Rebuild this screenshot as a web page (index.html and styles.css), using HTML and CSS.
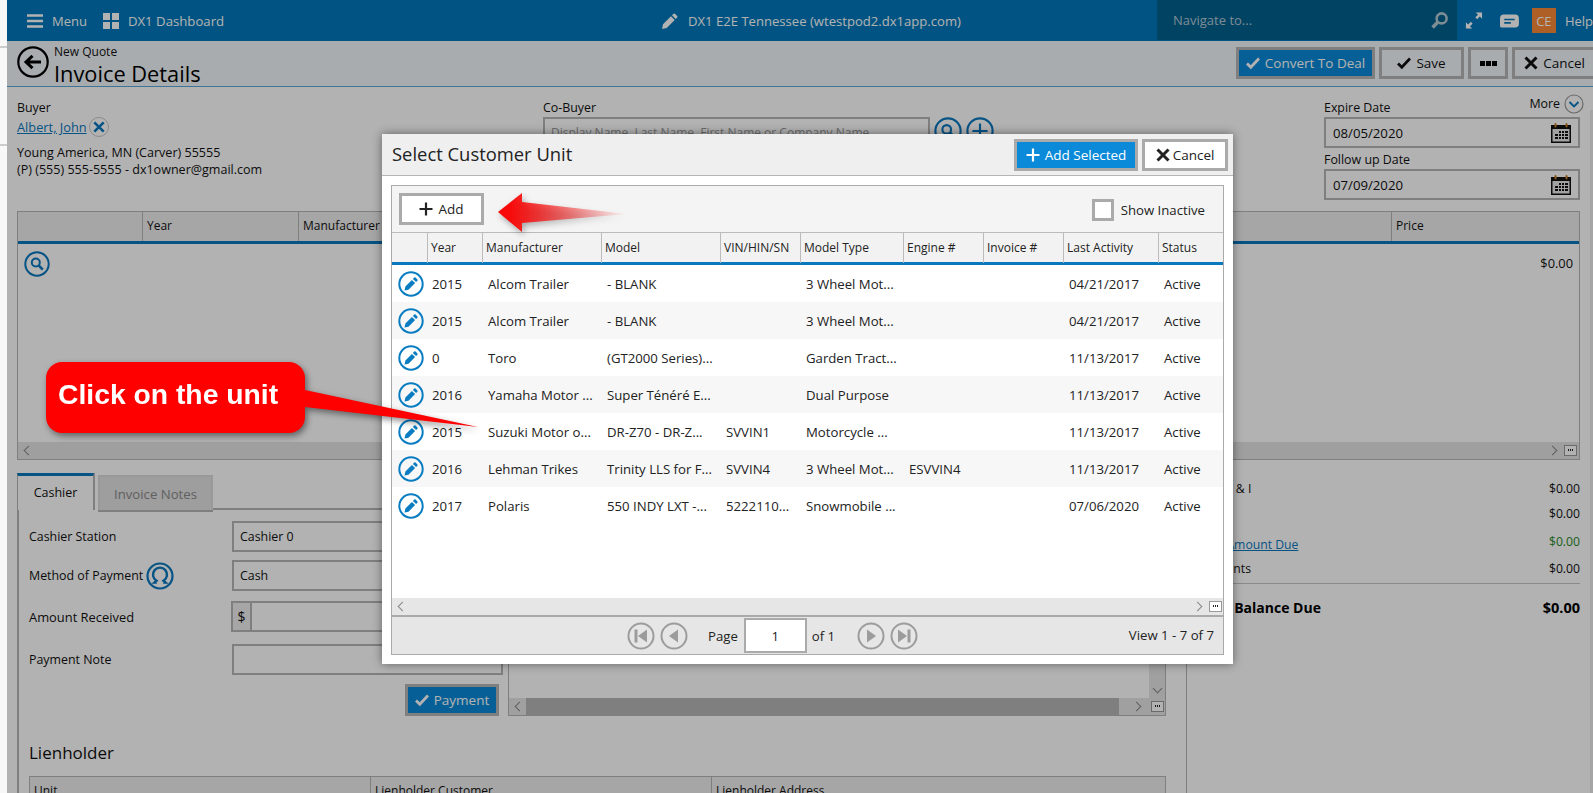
FILE: index.html
```html
<!DOCTYPE html>
<html lang="en">
<head>
<meta charset="utf-8">
<title>Invoice Details</title>
<link rel="stylesheet" href="styles.css">
</head>
<body>
<svg class="sprite" aria-hidden="true">
  <symbol id="i-edit" viewBox="0 0 26 26">
    <circle cx="13" cy="13" r="11.7" fill="none" stroke="currentColor" stroke-width="2"/>
    <path fill="currentColor" d="M16.2 6.6a1 1 0 0 1 1.4 0l1.8 1.8a1 1 0 0 1 0 1.4l-1.3 1.3-3.2-3.2zM13.9 8.9l3.2 3.2-6.6 6.6-4 .9.9-4z"/>
  </symbol>
  <symbol id="i-search" viewBox="0 0 26 26">
    <circle cx="13" cy="13" r="11.7" fill="none" stroke="currentColor" stroke-width="2"/>
    <circle cx="11.8" cy="11.5" r="4" fill="none" stroke="currentColor" stroke-width="2"/>
    <path d="M14.8 14.6l4 4" stroke="currentColor" stroke-width="2.6"/>
  </symbol>
  <symbol id="i-plus-c" viewBox="0 0 26 26">
    <circle cx="13" cy="13" r="11.7" fill="none" stroke="currentColor" stroke-width="2"/>
    <path d="M13 6v14M6 13h14" stroke="currentColor" stroke-width="2"/>
  </symbol>
  <symbol id="i-plus" viewBox="0 0 14 14"><path d="M7 .5v13M.5 7h13" stroke="currentColor" stroke-width="2.2"/></symbol>
  <symbol id="i-x" viewBox="0 0 14 14"><path d="M1.500 1.500l11 11M12.500 1.500l-11 11" stroke="currentColor" stroke-width="3"/></symbol>
  <symbol id="i-check" viewBox="0 0 14 14"><path d="M1 7.500l3.800 3.800L13 2.500" fill="none" stroke="currentColor" stroke-width="2.800"/></symbol>
  <symbol id="i-cal" viewBox="0 0 22 22">
    <rect x="1" y="3" width="20" height="18" fill="#111"/>
    <rect x="2.500" y="7" width="17" height="12.500" fill="#e8e8e8"/>
    <path d="M9 9h2v2H9zM12 9h2v2h-2zM15 9h3v2h-3zM5 12h3v2H5zM9 12h2v2H9zM12 12h2v2h-2zM15 12h3v2h-3zM5 15h3v2H5zM9 15h2v2H9zM12 15h2v2h-2zM15 15h3v2h-3z" fill="#111"/>
    <rect x="4.500" y="1" width="2" height="4.500" rx="1" fill="#c87a20"/>
    <rect x="15.500" y="1" width="2" height="4.500" rx="1" fill="#c87a20"/>
  </symbol>
  <symbol id="i-first" viewBox="0 0 28 28">
    <circle cx="14" cy="14" r="12.500" fill="none" stroke="currentColor" stroke-width="2"/>
    <path fill="currentColor" d="M7.500 7.500h3v13h-3zM20 7.500v13l-9-6.500z"/>
  </symbol>
  <symbol id="i-prev" viewBox="0 0 28 28">
    <circle cx="14" cy="14" r="12.500" fill="none" stroke="currentColor" stroke-width="2"/>
    <path fill="currentColor" d="M18 7.500v13l-9-6.500z"/>
  </symbol>
  <symbol id="i-next" viewBox="0 0 28 28">
    <circle cx="14" cy="14" r="12.500" fill="none" stroke="currentColor" stroke-width="2"/>
    <path fill="currentColor" d="M10 7.500v13l9-6.500z"/>
  </symbol>
  <symbol id="i-last" viewBox="0 0 28 28">
    <circle cx="14" cy="14" r="12.500" fill="none" stroke="currentColor" stroke-width="2"/>
    <path fill="currentColor" d="M20.500 7.500h-3v13h3zM8 7.500v13l9-6.500z"/>
  </symbol>
</svg>

<div class="gutter"></div>

<div class="app">
  <header class="topbar">
    <div class="topbar-left">
      <svg class="tb-icon" viewBox="0 0 16 14"><path d="M0 1.500h16M0 7h16M0 12.500h16" stroke="currentColor" stroke-width="2.400"/></svg>
      <span class="tb-text">Menu</span>
      <svg class="tb-icon tb-grid" viewBox="0 0 16 16"><path fill="currentColor" d="M0 0h7v7H0zM9 0h7v7H9zM0 9h7v7H0zM9 9h7v7H9z"/></svg>
      <span class="tb-text">DX1 Dashboard</span>
    </div>
    <div class="topbar-mid">
      <svg class="tb-pencil" viewBox="0 0 16 16"><path fill="currentColor" d="M11.500.800a1 1 0 0 1 1.400 0l2.300 2.300a1 1 0 0 1 0 1.400l-1.500 1.500L10 2.300zM9 3.300L12.700 7l-8 8L0 16l1-4.700z"/></svg>
      <span>DX1 E2E Tennessee (wtestpod2.dx1app.com)</span>
    </div>
    <div class="navsearch">
      <span>Navigate to...</span>
      <svg class="tb-mag" viewBox="0 0 16 16"><circle cx="10" cy="6" r="4.700" fill="none" stroke="currentColor" stroke-width="2.400"/><path d="M6.500 9.500L1.500 14.500" stroke="currentColor" stroke-width="3.400"/></svg>
    </div>
    <div class="topbar-right">
      <svg class="tb-expand" viewBox="0 0 20 20"><path fill="currentColor" d="M12 1h7v7l-2.500-2.500-3 3-2-2 3-3zM8 19H1v-7l2.500 2.500 3-3 2 2-3 3z"/></svg>
      <svg class="tb-chat" viewBox="0 0 20 16"><path fill="currentColor" fill-rule="evenodd" d="M4 1h12a4 4 0 0 1 4 4v6a4 4 0 0 1-4 4H2a2 2 0 0 1-2-2V5a4 4 0 0 1 4-4zM4.500 5.500v1.800h11V5.500zm0 3.500v1.800h7V9z"/></svg>
      <span class="avatar">CE</span>
      <span class="tb-text">Help</span>
    </div>
  </header>

  <div class="pagehead">
    <svg class="back" viewBox="0 0 32 32"><circle cx="16" cy="16" r="14.700" fill="none" stroke="currentColor" stroke-width="2.200"/><path d="M24 16H10M15.500 9.800L9 16l6.500 6.200" fill="none" stroke="currentColor" stroke-width="3"/></svg>
    <div class="titles">
      <div class="crumb">New Quote</div>
      <h1 class="title">Invoice Details</h1>
    </div>
    <div class="actions">
      <button class="btn btn-primary btn-convert"><svg class="ico"><use href="#i-check"/></svg>Convert To Deal</button>
      <button class="btn btn-save"><svg class="ico"><use href="#i-check"/></svg>Save</button>
      <button class="btn btn-more"><span class="dots"></span></button>
      <button class="btn btn-cancel"><svg class="ico"><use href="#i-x"/></svg>Cancel</button>
    </div>
  </div>

  <main class="content">
    <section class="cust">
      <div class="buyer">
        <div class="lbl">Buyer</div>
        <div class="buyer-name"><a class="link" href="#">Albert, John</a>
          <span class="xbadge"><svg viewBox="0 0 14 14"><use href="#i-x"/></svg></span>
        </div>
        <div class="addr">Young America, MN (Carver) 55555<br>(P) (555) 555-5555 - dx1owner@gmail.com</div>
      </div>
      <div class="cobuyer">
        <div class="lbl">Co-Buyer</div>
        <div class="cobuyer-row">
          <div class="field field-co">Display Name, Last Name, First Name or Company Name</div>
          <svg class="round round-first"><use href="#i-search"/></svg>
          <svg class="round"><use href="#i-plus-c"/></svg>
        </div>
      </div>
      <div class="dates">
        <div class="dates-head"><span class="lbl">Expire Date</span>
          <span class="more">More <svg class="more-ico" viewBox="0 0 20 20"><circle cx="10" cy="10" r="9" fill="none" stroke="#9a9a9a" stroke-width="1.200"/><path d="M5.500 8l4.500 4.500L14.500 8" fill="none" stroke="#0a78c0" stroke-width="1.800"/></svg></span>
        </div>
        <div class="field field-date"><span>08/05/2020</span><svg class="cal"><use href="#i-cal"/></svg></div>
        <div class="lbl lbl-gap">Follow up Date</div>
        <div class="field field-date"><span>07/09/2020</span><svg class="cal"><use href="#i-cal"/></svg></div>
      </div>
    </section>

    <section class="bgtable">
      <div class="bgtable-head">
        <div class="th"></div><div class="th">Year</div><div class="th">Manufacturer</div><div class="th">Price</div>
      </div>
      <div class="bgtable-body">
        <svg class="round round-sm"><use href="#i-search"/></svg>
        <span class="bg-price">$0.00</span>
      </div>
      <div class="hbar"><span class="chev chev-l"></span><span class="chev chev-r"></span><span class="grip"></span></div>
    </section>

    <section class="lower">
      <div class="left">
        <div class="tabs">
          <div class="tab tab-on">Cashier</div>
          <div class="tab tab-off">Invoice Notes</div>
          <div class="tab-fill"></div>
        </div>
        <div class="panel">
          <div class="cashier">
            <div class="form">
              <div class="frow frow-1"><label>Cashier Station</label><div class="field">Cashier 0</div></div>
              <div class="frow frow-2"><label class="lbl-ico">Method of Payment
                <svg class="round round-pay" viewBox="0 0 28 28"><circle cx="14" cy="14" r="12.500" fill="none" stroke="currentColor" stroke-width="2.200"/><path d="M10.800 20.500H8.500l2-1.800a7 7 0 1 1 7 0l2 1.800h-2.300" fill="none" stroke="currentColor" stroke-width="2.400"/></svg></label><div class="field">Cash</div></div>
              <div class="frow frow-3"><label class="lbl-wide">Amount Received</label><div class="field field-money"><span class="dollar">$</span></div></div>
              <div class="frow frow-4"><label>Payment Note</label><div class="field"></div></div>
              <div class="pay-row"><button class="btn btn-primary btn-pay"><svg class="ico"><use href="#i-check"/></svg>Payment</button></div>
            </div>
            <div class="paybox">
              <div class="paybox-main"><div class="vbar"><span class="chev chev-d"></span></div></div>
              <div class="paybar">
                <span class="paybar-end"><span class="chev chev-l"></span></span>
                <span class="paybar-thumb"></span>
                <span class="paybar-end paybar-end-r"><span class="chev chev-r"></span></span>
                <span class="grip"></span>
              </div>
            </div>
          </div>
          <h2 class="lien-title">Lienholder</h2>
          <div class="lien-head"><div class="th">Unit</div><div class="th">Lienholder Customer</div><div class="th">Lienholder Address</div></div>
        </div>
      </div>
      <aside class="summary">
        <div class="srow srow-1"><span>Total F &amp; I</span><span>$0.00</span></div>
        <div class="srow srow-2"><span>Tax</span><span>$0.00</span></div>
        <div class="srow srow-3"><a class="link" href="#">Total Amount Due</a><span class="green">$0.00</span></div>
        <div class="srow srow-4"><span>Payments</span><span>$0.00</span></div>
        <div class="srow srow-total"><span class="total-label">Total Balance Due</span><span>$0.00</span></div>
      </aside>
    </section>
  </main>
</div>

<div class="pagebar"></div>
<div class="scrim"></div>

<div class="modal">
  <div class="modal-head">
    <h2 class="modal-title">Select Customer Unit</h2>
    <button class="mbtn mbtn-primary mbtn-sel"><svg class="ico ico-plus"><use href="#i-plus"/></svg>Add Selected</button>
    <button class="mbtn mbtn-cancel"><svg class="ico"><use href="#i-x"/></svg>Cancel</button>
  </div>
  <div class="grid">
    <div class="toolbar">
      <button class="mbtn mbtn-add"><svg class="ico ico-plus"><use href="#i-plus"/></svg>Add</button>
      <label class="inactive"><span class="check"></span>Show Inactive</label>
    </div>
    <div class="row row-head">
      <div></div><div>Year</div><div>Manufacturer</div><div>Model</div><div>VIN/HIN/SN</div><div>Model Type</div><div>Engine #</div><div>Invoice #</div><div>Last Activity</div><div>Status</div>
    </div>
    <div class="rows">
      <div class="row row-data"><svg class="edit"><use href="#i-edit"/></svg><div>2015</div><div>Alcom Trailer</div><div>- BLANK</div><div></div><div>3 Wheel Mot...</div><div></div><div></div><div>04/21/2017</div><div>Active</div></div>
      <div class="row row-data"><svg class="edit"><use href="#i-edit"/></svg><div>2015</div><div>Alcom Trailer</div><div>- BLANK</div><div></div><div>3 Wheel Mot...</div><div></div><div></div><div>04/21/2017</div><div>Active</div></div>
      <div class="row row-data"><svg class="edit"><use href="#i-edit"/></svg><div>0</div><div>Toro</div><div>(GT2000 Series)...</div><div></div><div>Garden Tract...</div><div></div><div></div><div>11/13/2017</div><div>Active</div></div>
      <div class="row row-data"><svg class="edit"><use href="#i-edit"/></svg><div>2016</div><div>Yamaha Motor ...</div><div>Super Ténéré E...</div><div></div><div>Dual Purpose</div><div></div><div></div><div>11/13/2017</div><div>Active</div></div>
      <div class="row row-data"><svg class="edit"><use href="#i-edit"/></svg><div>2015</div><div>Suzuki Motor o...</div><div>DR-Z70 - DR-Z...</div><div>SVVIN1</div><div>Motorcycle ...</div><div></div><div></div><div>11/13/2017</div><div>Active</div></div>
      <div class="row row-data"><svg class="edit"><use href="#i-edit"/></svg><div>2016</div><div>Lehman Trikes</div><div>Trinity LLS for F...</div><div>SVVIN4</div><div>3 Wheel Mot...</div><div>ESVVIN4</div><div></div><div>11/13/2017</div><div>Active</div></div>
      <div class="row row-data"><svg class="edit"><use href="#i-edit"/></svg><div>2017</div><div>Polaris</div><div>550 INDY LXT -...</div><div>5222110...</div><div>Snowmobile ...</div><div></div><div></div><div>07/06/2020</div><div>Active</div></div>
    </div>
    <div class="hbar hbar-light"><span class="chev chev-l"></span><span class="chev chev-r"></span><span class="grip"></span></div>
    <div class="pager">
      <div class="pager-center">
        <svg class="pg pg-first"><use href="#i-first"/></svg>
        <svg class="pg"><use href="#i-prev"/></svg>
        <span class="pg-page">Page</span>
        <span class="pg-input">1</span>
        <span class="pg-of">of 1</span>
        <svg class="pg pg-next"><use href="#i-next"/></svg>
        <svg class="pg"><use href="#i-last"/></svg>
      </div>
      <span class="pg-view">View 1 - 7 of 7</span>
    </div>
  </div>
</div>

<svg class="arrow" viewBox="495 186 140 52">
  <defs>
    <linearGradient id="fade" gradientUnits="userSpaceOnUse" x1="510" y1="0" x2="627" y2="0">
      <stop offset="0" stop-color="#f80a0a"/>
      <stop offset="1" stop-color="#f80a0a" stop-opacity="0"/>
    </linearGradient>
  </defs>
  <path fill="url(#fade)" d="M498 212L522 193V202L627 214L522 223V232Z"/>
</svg>

<svg class="callout" viewBox="40 355 445 90">
  <path fill="#f00" d="M62 362H289A16 16 0 0 1 305 378V390L478 427L305 407V417A16 16 0 0 1 289 433H62A16 16 0 0 1 46 417V378A16 16 0 0 1 62 362Z"/>
  <text class="callout-text" x="58" y="404">Click on the unit</text>
</svg>
</body>
</html>
```
FILE: styles.css
```css
* { box-sizing: border-box; }
html, body { margin: 0; height: 793px; overflow: hidden; }
body {
  display: flex;
  width: 1593px;
  position: relative;
  font: 12.4px/18px "Open Sans", "Noto Sans", sans-serif;
  color: #111;
  background: #fff;
}
.sprite { width: 0; height: 0; position: absolute; }
svg { display: block; }
h1, h2 { margin: 0; font-weight: 400; }
button { font: inherit; margin: 0; }
a.link { color: #0a78c0; text-decoration: underline; }

.gutter {
  flex: 0 0 7px;
  background: linear-gradient(#f8f8f8 46px, #ccc 46px, #ccc 48px, #f8f8f8 48px, #f8f8f8 144px, #ccc 144px, #ccc 146px, #f8f8f8 146px);
}
.app { flex: 0 0 1586px; width: 1586px; display: flex; flex-direction: column; }

/* top bar */
.topbar { height: 41px; flex: none; display: flex; align-items: center; background: #0078ba; color: #fff; font-size: 13px; }
.topbar-left { flex: 0 0 490px; display: flex; align-items: center; padding-left: 20px; }
.topbar-left .tb-text:last-child { font-size: 13.2px; }
.tb-icon { width: 16px; height: 14px; margin-right: 9px; }
.tb-grid { height: 16px; margin-left: 16px; }
.topbar-mid { flex: 0 0 660px; display: flex; align-items: center; padding-left: 165px; font-size: 13.1px; }
.tb-pencil { width: 16px; height: 16px; margin-right: 10px; }
.navsearch { flex: 0 0 300px; height: 40px; align-self: flex-start; background: #00608f; display: flex; align-items: center; justify-content: space-between; padding: 0 9px 0 16px; color: #b5c9d4; font-size: 13px; }
.tb-mag { width: 17px; height: 17px; }
.topbar-right { display: flex; align-items: center; flex: 1; white-space: nowrap; overflow: hidden; }
.tb-expand { width: 19px; height: 19px; margin-left: 8px; }
.tb-chat { width: 20px; height: 16px; margin-left: 17px; }
.avatar { width: 24px; height: 25px; margin: 0 9px 0 13px; background: #fa8835; display: flex; align-items: center; justify-content: center; font-size: 13px; flex: none; }

/* page header */
.pagehead { height: 46px; flex: none; display: flex; background: #f1f7fb; border-bottom: 1px solid #5ba6d6; padding-left: 10px; position: relative; }
.back { width: 32px; height: 32px; margin-top: 5px; color: #000; flex: none; }
.titles { margin-left: 5px; margin-top: 2px; }
.crumb { font-size: 12px; line-height: 17px; }
.title { font-size: 21.8px; line-height: 26px; margin-top: 1px; color: #000; }
.actions { margin-left: auto; display: flex; gap: 4px; padding-top: 6px; margin-right: -4px; height: 38px; }
.btn { height: 32px; border: 3px solid #b7b7b7; background: transparent; color: #111; display: flex; align-items: center; justify-content: center; font-size: 13.5px; padding: 0; white-space: nowrap; }
.btn .ico, .mbtn .ico { width: 14px; height: 14px; margin-right: 5px; flex: none; }
.btn-primary { background: #0a8ad8; color: #fff; }
.btn-convert { width: 139px; }
.btn-save { width: 85px; }
.btn-more { width: 40px; }
.btn-cancel { width: 85px; }
.dots { width: 17px; height: 5px; background: repeating-linear-gradient(90deg, #000 0 5px, transparent 5px 6px); }

/* customer block */
.content { padding: 0 0 0 10px; flex: 1; min-height: 0; }
.cust { height: 124px; display: grid; grid-template-columns: 526px 781px 256px; padding-top: 12px; }
.lbl { line-height: 18px; font-size: 12.4px; display: block; }
.buyer-name { display: flex; align-items: center; height: 20px; gap: 2px; }
.buyer-name .link { font-size: 12.8px; }
.xbadge { width: 20px; height: 20px; border: 1px solid #c8c8c8; border-radius: 50%; display: flex; align-items: center; justify-content: center; color: #0a78c0; }
.xbadge svg { width: 12px; height: 12px; }
.addr { margin-top: 7px; line-height: 17px; font-size: 12.55px; }
.cobuyer-row { display: flex; align-items: flex-start; }
.field { height: 31px; border: 2px solid #b7b7b7; background: transparent; display: flex; align-items: center; padding: 0 6px; }
.field-co { width: 387px; color: #999; font-size: 12px; }
.round { width: 28px; height: 28px; color: #0a78c0; margin-left: 4px; flex: none; }
.dates-head { display: flex; justify-content: space-between; align-items: flex-start; height: 18px; }
.more { display: flex; align-items: center; gap: 4px; margin-right: -4px; margin-top: -5px; }
.more-ico { width: 20px; height: 20px; }
.field-date { justify-content: space-between; padding: 0 6px 0 7px; font-size: 13.2px; }
.cal { width: 22px; height: 22px; }
.lbl-gap { margin-top: 3px; }

/* background table */
.bgtable { width: 1563px; height: 249px; border: 1px solid #b7b7b7; display: flex; flex-direction: column; }
.bgtable-head { display: grid; grid-template-columns: 124px 156px 1fr 188px; height: 32px; flex: none; background: #eee; border-bottom: 3px solid #0a78bd; font-size: 12px; }
.th { padding: 5px 4px; border-left: 1px solid #b7b7b7; }
.th:first-child { border-left: 0; }
.bgtable-body { flex: 1; display: flex; justify-content: space-between; padding: 7px 6px 0 6px; }
.bg-price { font-size: 12.8px; margin-top: 3px; }
.round-sm { margin-left: 0; width: 26px; height: 26px; }
.hbar { height: 17px; flex: none; background: #e6e6e6; display: flex; align-items: center; padding: 0 2px 0 7px; }
.bgtable .hbar { background: #e4e4e4; }
.grip { width: 13px; height: 11px; border: 1px solid #999; background: #fff; position: relative; flex: none; }
.grip::after { content: ""; position: absolute; left: 3px; top: 3px; width: 5px; height: 2px; background: repeating-linear-gradient(90deg, #222 0 1px, transparent 1px 2px); }
.chev { width: 7px; height: 7px; border-left: 1px solid #888; border-bottom: 1px solid #888; flex: none; display: block; }
.chev-l { transform: rotate(45deg); }
.chev-r { transform: rotate(225deg); margin-left: auto; margin-right: 8px; }
.chev-d { transform: rotate(-45deg); }

/* lower */
.lower { display: grid; grid-template-columns: 1170px 385px; column-gap: 8px; margin-top: 13px; }
.tabs { display: flex; height: 37px; align-items: flex-end; }
.tab { font-size: 12.5px; display: flex; align-items: center; justify-content: center; }
.tab-on { width: 77px; height: 37px; border: 1px solid #b7b7b7; border-top: 3px solid #0a78bd; border-bottom: 0; }
.tab-off { width: 115px; height: 35px; margin-left: 4px; border: 2px solid #dcdcdc; background: #e2e2e2; color: #8a8a8a; border-bottom: 0; font-size: 13.2px; }
.tab-fill { flex: 1; height: 2px; border-bottom: 2px solid #b7b7b7; }
.tabs .tab-off { box-shadow: 0 2px 0 #b7b7b7; }
.tabs .tab-on { box-shadow: 1px 0 0 #b7b7b7; }
.panel { border-left: 2px solid #b7b7b7; border-right: 1px solid #b7b7b7; padding: 11px 20px 0 10px; height: 283px; overflow: hidden; }
.cashier { display: flex; height: 195px; }
.form { flex: 0 0 474px; width: 474px; }
.frow { display: grid; grid-template-columns: 203px 271px; align-items: center; }
.frow-2 { margin-top: 8px; }
.frow-3 { margin-top: 10px; }
.frow-4 { margin-top: 12px; }
.lbl-ico { display: flex; align-items: center; gap: 3px; }
.lbl-wide { font-size: 12.9px; }
.round-pay { margin-left: 0; color: #0a78c0; }
.field-money { padding: 0; margin-left: -1px; width: 272px; }
.dollar { width: 19px; height: 100%; border-right: 2px solid #b7b7b7; background: #eee; display: flex; align-items: center; justify-content: center; font-size: 14px; }
.pay-row { display: flex; justify-content: flex-end; margin-top: 9px; padding-right: 4px; }
.btn-pay { width: 94px; }
.paybox { margin-left: 5px; width: 659px; border: 1px solid #b7b7b7; display: flex; flex-direction: column; }
.paybox-main { flex: 1; display: flex; justify-content: flex-end; }
.vbar { width: 16px; background: #e6e6e6; display: flex; align-items: flex-end; justify-content: center; padding-bottom: 6px; }
.paybar { height: 17px; flex: none; display: flex; align-items: center; background: #e6e6e6; }
.paybar-end { width: 17px; height: 100%; display: flex; align-items: center; padding-left: 7px; flex: none; }
.paybar-end-r { width: 29px; padding-left: 0; }
.paybar-thumb { width: 593px; height: 100%; background: #b7b7b7; flex: none; }
.paybar .grip { margin-left: 3px; }
.lien-title { font-size: 17px; line-height: 24px; margin-top: 25px; }
.lien-head { display: grid; grid-template-columns: 340px 341px 1fr; height: 30px; margin-top: 11px; background: #eee; border: 1px solid #b7b7b7; font-size: 12px; }

/* summary */
.summary { padding-top: 7px; font-size: 12.2px; }
.srow { display: flex; justify-content: space-between; height: 18px; align-items: center; }
.srow-2 { margin-top: 7px; }
.srow-3 { margin-top: 10px; }
.srow-4 { margin-top: 9px; }
.srow-3 .link { position: relative; top: 3px; }
.srow-total { margin-top: 20px; height: 20px; font-weight: 700; position: relative; font-size: 14.5px; color: #000; }
.srow-total::before { content: ""; position: absolute; left: 0; right: 0; top: -15px; border-top: 1px solid #c6c6c6; }
.total-label { font-size: 14px; }
.green { color: #2a8a2a; }

/* overlays */
.pagebar { position: absolute; right: 0; top: 110px; bottom: 0; width: 3px; background: #ececec; }
.scrim { position: absolute; left: 7px; top: 0; right: 0; bottom: 0; background: rgba(0, 0, 0, .3); }
.modal { position: absolute; left: 382px; top: 134px; width: 851px; height: 530px; background: #fff; box-shadow: 0 0 9px rgba(0, 0, 0, .45); display: flex; flex-direction: column; font-size: 13.2px; color: #222; }
.modal-head { height: 42px; flex: none; background: #efefef; border-bottom: 1px solid #b5b5b5; display: flex; align-items: flex-start; padding: 5px 5px 0 10px; }
.modal-title { font-size: 18.4px; line-height: 28px; margin-top: 1px; margin-right: auto; }
.mbtn { height: 32px; border: 3px solid #aaa; background: #fff; color: #222; display: flex; align-items: center; justify-content: center; padding: 0; font-size: 13.5px; }
.mbtn-primary { background: #0a8ad8; color: #fff; }
.mbtn-sel { width: 124px; margin-right: 4px; }
.mbtn-cancel { width: 86px; }
.mbtn-cancel .ico { margin-right: 3px; }
.ico-plus { width: 14px; height: 14px; }
.grid { margin: 9px; flex: 1; min-height: 0; border: 1px solid #aaa; display: flex; flex-direction: column; }
.toolbar { height: 46px; flex: none; background: #f4f4f4; display: flex; align-items: center; justify-content: space-between; padding: 0 18px 0 7px; }
.mbtn-add { width: 85px; }
.inactive { display: flex; align-items: center; gap: 7px; padding-top: 1px; }
.check { width: 22px; height: 22px; border: 3px solid #aaa; background: #fff; display: block; }
.row { display: grid; grid-template-columns: 35px 55px 119px 119px 80px 103px 80px 80px 95px 1fr; }
.row-head { height: 33px; flex: none; background: #f2f2f2; border-top: 1px solid #bbb; border-bottom: 3px solid #0a78bd; line-height: 30px; font-size: 12px; }
.row-head div { border-left: 1px solid #bbb; padding-left: 3px; white-space: nowrap; }
.row-head div:first-child { border-left: 0; }
.rows { flex: 1; min-height: 0; }
.row-data { height: 37px; align-items: center; }
.row-data:nth-child(even) { background: #f7f7f7; }
.row-data div { padding-left: 5px; white-space: nowrap; overflow: hidden; }
.row-data div + div { padding-left: 6px; }
.edit { width: 26px; height: 26px; margin-left: 6px; color: #0a7dc2; }
.hbar-light { background: #e6e6e6; }
.hbar-light .grip { margin-right: -1px; }
.pager { height: 39px; flex: none; background: #e6e6e6; border-top: 2px solid #aaa; display: flex; align-items: center; position: relative; }
.pager-center { display: flex; align-items: center; margin-left: 235px; }
.pg { width: 28px; height: 28px; color: #9c9c9c; margin-left: 5px; flex: none; }
.pg-first { margin-left: 0; }
.pg-page { margin-left: 20px; }
.pg-input { width: 63px; height: 35px; background: #fff; border: 2px solid #aaa; display: flex; align-items: center; justify-content: center; margin-left: 6px; }
.pg-of { margin-left: 5px; }
.pg-next { margin-left: 22px; }
.pg-view { margin-left: auto; margin-right: 9px; margin-top: -1px; }
.arrow { position: absolute; left: 495px; top: 186px; width: 140px; height: 52px; filter: drop-shadow(2px 3px 3px rgba(0, 0, 0, .35)); }
.callout { position: absolute; left: 40px; top: 355px; width: 445px; height: 90px; filter: drop-shadow(2px 3px 3px rgba(0, 0, 0, .45)); }
.callout-text { font: 700 28.3px "Liberation Sans", Arial, sans-serif; fill: #fff; }
```
